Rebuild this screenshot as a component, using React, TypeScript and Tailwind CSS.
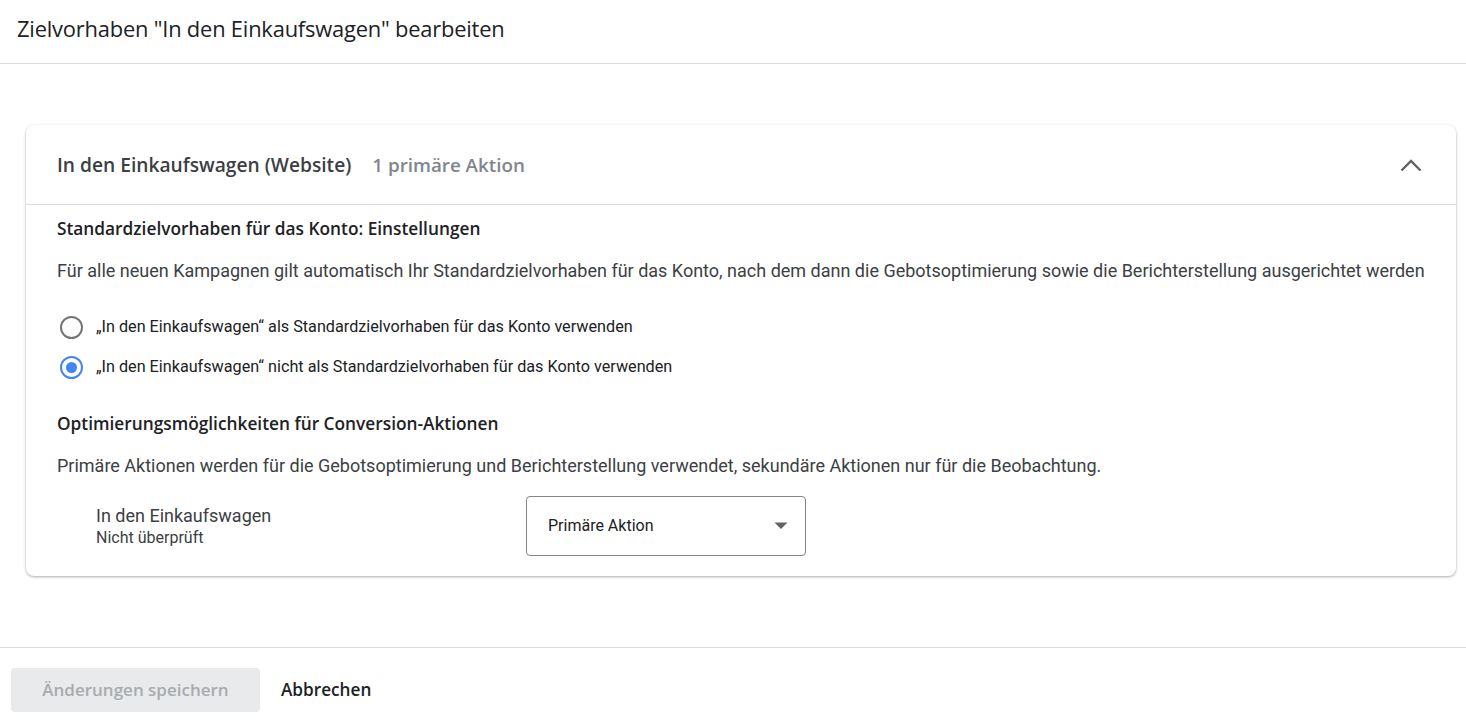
import React from "react";

const GS = "font-['Open_Sans','Liberation_Sans',sans-serif]";
const RB = "font-['Roboto','Liberation_Sans',sans-serif]";

function Radio({ checked }: { checked: boolean }) {
  return (
    <span
      className={`flex h-[23px] w-[23px] shrink-0 items-center justify-center rounded-full border-[2.5px] ${
        checked ? "border-[#4285f4]" : "border-[#757575]"
      }`}
    >
      {checked && <span className="h-[11px] w-[11px] rounded-full bg-[#4285f4]" />}
    </span>
  );
}

export default function App() {
  return (
    <div className={`flex h-[726px] w-full flex-col bg-white ${RB}`}>
      <header className="flex h-[64px] shrink-0 items-start border-b border-[#dadce0] pl-[17px] pt-[14px]">
        <h1 className={`${GS} text-[21.9px] leading-[30px] text-[#202124] tracking-[-0.2px]`}>
          Zielvorhaben "In den Einkaufswagen" bearbeiten
        </h1>
      </header>

      <main className="flex-1 pl-[26px] pr-[10px] pt-[61px]">
        <section className="rounded-[8px] bg-white shadow-[0_1px_3px_rgba(60,64,67,0.3),0_1px_2px_rgba(60,64,67,0.15)]">
          <div className="flex h-[80px] items-center justify-between border-b border-[#dadce0] pl-[31px] pr-[34px]">
            <div className={`${GS} flex items-center gap-[21px] leading-[28px]`}>
              <span className="text-[19.2px] font-semibold text-[#3c4043]">In den Einkaufswagen (Website)</span>
              <span className="text-[18.8px] font-semibold text-[#80868b]">1 primäre Aktion</span>
            </div>
            <svg width="22" height="14" viewBox="0 0 22 14" className="text-[#5f6368]">
              <polyline points="1.5,12.5 11,3 20.5,12.5" fill="none" stroke="currentColor" strokeWidth="2.4" />
            </svg>
          </div>

          <div className="pl-[31px] pr-[20px] pb-[20px] pt-[12px]">
            <h2 className={`${GS} text-[17.3px] leading-[24px] font-semibold text-[#202124]`}>
              Standardzielvorhaben für das Konto: Einstellungen
            </h2>
            <p className="mt-[18px] text-[18px] leading-[24px] text-[#3c4043]">
              Für alle neuen Kampagnen gilt automatisch Ihr Standardzielvorhaben für das Konto, nach dem dann die Gebotsoptimierung sowie die Berichterstellung ausgerichtet werden
            </p>
            <div className="mt-[32px] flex flex-col gap-[16px] pl-[3px]">
              <label className="flex h-[24px] items-center gap-[13px] text-[16.2px] text-[#202124]">
                <Radio checked={false} />
                <span>„In den Einkaufswagen“ als Standardzielvorhaben für das Konto verwenden</span>
              </label>
              <label className="flex h-[24px] items-center gap-[13px] text-[16.2px] text-[#202124]">
                <Radio checked={true} />
                <span>„In den Einkaufswagen“ nicht als Standardzielvorhaben für das Konto verwenden</span>
              </label>
            </div>

            <h2 className={`${GS} mt-[33px] text-[17.3px] leading-[24px] font-semibold text-[#202124]`}>
              Optimierungsmöglichkeiten für Conversion-Aktionen
            </h2>
            <p className="mt-[18px] text-[18px] leading-[24px] text-[#3c4043]">
              Primäre Aktionen werden für die Gebotsoptimierung und Berichterstellung verwendet, sekundäre Aktionen nur für die Beobachtung.
            </p>

            <div className="mt-[18px] flex items-center">
              <div className="w-[469px] pl-[39px]">
                <div className="text-[18px] leading-[24px] text-[#3c4043]">In den Einkaufswagen</div>
                <div className="text-[16px] leading-[20px] text-[#3c4043]">Nicht überprüft</div>
              </div>
              <div className="flex h-[60px] w-[280px] items-center justify-between rounded-[4px] border border-[#80868b] pl-[21px] pr-[17px]">
                <span className="text-[16px] text-[#202124]">Primäre Aktion</span>
                <svg width="14" height="8" viewBox="0 0 14 8">
                  <path d="M0.5 0.5h13L7 7z" fill="#5f6368" />
                </svg>
              </div>
            </div>
          </div>
        </section>
      </main>

      <footer className="flex h-[79px] shrink-0 items-start border-t border-[#dadce0] pl-[11px] pt-[20px]">
        <button className={`${GS} h-[44px] w-[249px] rounded-[4px] bg-[#e8eaeb] text-[17px] font-semibold text-[#a8abae]`}>
          Änderungen speichern
        </button>
        <button className={`${GS} ml-[21px] h-[44px] text-[17.2px] font-semibold text-[#202124]`}>
          Abbrechen
        </button>
      </footer>
    </div>
  );
}
